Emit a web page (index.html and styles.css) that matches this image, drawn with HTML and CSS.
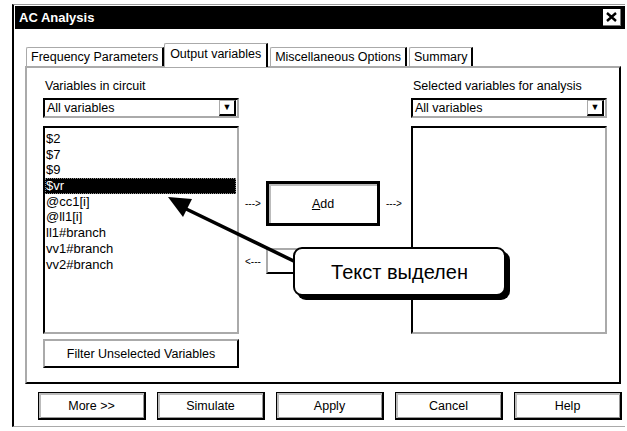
FILE: index.html
```
<!DOCTYPE html>
<html lang="en">
<head>
    <meta charset="UTF-8">
    <title>AC Analysis</title>
    <link rel="stylesheet" href="styles.css">
</head>
<body>
    <div class="window">
        <div class="titlebar">
            <span class="title">AC Analysis</span>
            <span class="close">
                <svg width="11" height="10" viewBox="0 0 11 10"><path d="M1 1 L10 9 M10 1 L1 9" stroke="#000" stroke-width="2.4"/></svg>
            </span>
        </div>

        <div class="tabs">
            <div class="tab">Frequency Parameters</div>
            <div class="tab active">Output variables</div>
            <div class="tab">Miscellaneous Options</div>
            <div class="tab">Summary</div>
        </div>

        <div class="panel">
            <div class="col">
                <div class="label">Variables in circuit</div>
                <div class="combo">
                    <span>All variables</span>
                    <span class="drop">&#9660;</span>
                </div>
                <div class="listbox">
                    <div class="item">$2</div>
                    <div class="item">$7</div>
                    <div class="item">$9</div>
                    <div class="item selected">$vr</div>
                    <div class="item">@cc1[i]</div>
                    <div class="item">@ll1[i]</div>
                    <div class="item">ll1#branch</div>
                    <div class="item">vv1#branch</div>
                    <div class="item">vv2#branch</div>
                </div>
                <div class="btn filter">Filter Unselected Variables</div>
            </div>

            <div class="mid">
                <div class="move-row add-row">
                    <span class="dashes">---&gt;</span>
                    <div class="btn add"><u>A</u>dd</div>
                    <span class="dashes">---&gt;</span>
                </div>
                <div class="move-row">
                    <span class="dashes">&lt;---</span>
                    <!-- label is hidden under the callout -->
                    <div class="btn remove"></div>
                </div>
            </div>

            <div class="col right">
                <div class="label">Selected variables for analysis</div>
                <div class="combo">
                    <span>All variables</span>
                    <span class="drop">&#9660;</span>
                </div>
                <div class="listbox"></div>
            </div>
        </div>

        <div class="buttons">
            <div class="btn bottom">More &gt;&gt;</div>
            <div class="btn bottom">Simulate</div>
            <div class="btn bottom">Apply</div>
            <div class="btn bottom">Cancel</div>
            <div class="btn bottom">Help</div>
        </div>

        <!-- annotation drawn over the dialog -->
        <svg class="pointer" width="615" height="424" viewBox="0 0 615 424">
            <line x1="292" y1="262" x2="168" y2="202" stroke="#000" stroke-width="3.5"/>
            <polygon points="156,193 180,195 171,213" fill="#000"/>
        </svg>
        <div class="callout">Текст выделен</div>
    </div>
</body>
</html>
```

FILE: styles.css
```
body {
    margin: 0;
    background: #fff;
    font-family: "Liberation Sans", Arial, sans-serif;
    font-size: 12.5px;
    color: #000;
}

.window {
    position: relative;
    width: 613px;
    height: 423px;
    margin: 4px 0 0 12px;
    border-top: 1px solid #999;
    border-left: 2px solid #000;
    border-bottom: 1px solid #aaa;
    box-sizing: border-box;
}

.titlebar {
    display: flex;
    align-items: center;
    justify-content: space-between;
    height: 23px;
    margin: 1px 0 0 1px;
    padding: 0 4px 0 4px;
    background: #000;
}

.title {
    color: #fff;
    font-weight: bold;
    font-size: 13px;
}

.close {
    display: flex;
    align-items: center;
    justify-content: center;
    width: 17px;
    height: 16px;
    background: #fff;
    border-right: 1px solid #777;
    border-bottom: 1px solid #777;
}

.tabs {
    display: flex;
    align-items: flex-end;
    height: 23px;
    margin: 14px 0 0 12px;
}

.tab {
    height: 18px;
    line-height: 18px;
    padding: 0 4px;
    margin-right: 2px;
    border-top: 1px solid #aaa;
    border-left: 1px solid #aaa;
    border-right: 2px solid #000;
    border-top-left-radius: 2px;
    background: #fff;
}

.tab.active {
    position: relative;
    height: 23px;
    line-height: 21px;
    margin: 0 2px -1px -2px;
    padding: 0 5px;
    z-index: 1;
}

.panel {
    display: flex;
    width: 596px;
    height: 318px;
    margin-left: 11px;
    border-top: 2px solid #aaa;
    border-left: 2px solid #aaa;
    border-right: 2px solid #000;
    border-bottom: 2px solid #000;
    box-sizing: border-box;
}

.col {
    display: flex;
    flex-direction: column;
    width: 196px;
    margin: 11px 0 0 16px;
}

.col.right {
    margin-left: 10px;
}

.label {
    height: 14px;
    line-height: 14px;
    margin-left: 2px;
}

.combo {
    display: flex;
    align-items: center;
    justify-content: space-between;
    height: 16px;
    margin-top: 5px;
    padding: 0 1px 0 2px;
    border-top: 2px solid #000;
    border-left: 2px solid #000;
    border-right: 2px solid #aaa;
    border-bottom: 2px solid #aaa;
    box-sizing: content-box;
}

.drop {
    width: 14px;
    height: 13px;
    line-height: 13px;
    font-size: 9px;
    text-align: center;
    border-top: 1px solid #aaa;
    border-left: 1px solid #aaa;
    border-right: 2px solid #000;
    border-bottom: 2px solid #000;
}

.listbox {
    height: 201px;
    margin-top: 8px;
    padding-top: 3px;
    border-top: 2px solid #000;
    border-left: 2px solid #000;
    border-right: 2px solid #aaa;
    border-bottom: 2px solid #aaa;
}

.item {
    height: 15.7px;
    line-height: 15.7px;
    padding-left: 1px;
    margin-right: 1px;
    font-size: 13px;
}

.item.selected {
    background: #000;
    color: #fff;
    outline: 1px dotted #888;
    outline-offset: -1px;
}

.btn {
    display: flex;
    align-items: center;
    justify-content: center;
    background: #fff;
    box-sizing: border-box;
}

.filter {
    height: 29px;
    margin-top: 5px;
    border-top: 2px solid #aaa;
    border-left: 2px solid #aaa;
    border-right: 2px solid #000;
    border-bottom: 2px solid #000;
}

.mid {
    display: flex;
    flex-direction: column;
    margin: 113px 0 0 6px;
}

.move-row {
    display: flex;
    align-items: center;
    gap: 6px;
}

.add-row {
    margin-bottom: 22px;
}

.dashes {
    width: 15px;
    font-size: 10px;
    white-space: nowrap;
}

.add {
    width: 114px;
    height: 45px;
    border: 3px solid #000;
    box-shadow: inset 2px 2px #bbb;
}

.remove {
    width: 115px;
    height: 26px;
    border-top: 2px solid #aaa;
    border-left: 2px solid #aaa;
    border-right: 2px solid #000;
    border-bottom: 2px solid #000;
}

.buttons {
    display: flex;
    gap: 11px;
    margin: 8px 0 0 24px;
}

.bottom {
    width: 108px;
    height: 28px;
    border: 2px solid #000;
    border-top-width: 1px;
    border-left-width: 1px;
    box-shadow: inset 2px 2px #bbb, inset -1px -1px #999;
}

.pointer {
    position: absolute;
    left: -2px;
    top: -1px;
}

.callout {
    position: absolute;
    left: 279px;
    top: 242px;
    width: 213px;
    height: 49px;
    line-height: 47px;
    text-align: center;
    font-size: 20px;
    background: #fff;
    border: 2px solid #000;
    border-radius: 9px;
    box-shadow: 4px 4px 0 #000;
    box-sizing: border-box;
}
```
